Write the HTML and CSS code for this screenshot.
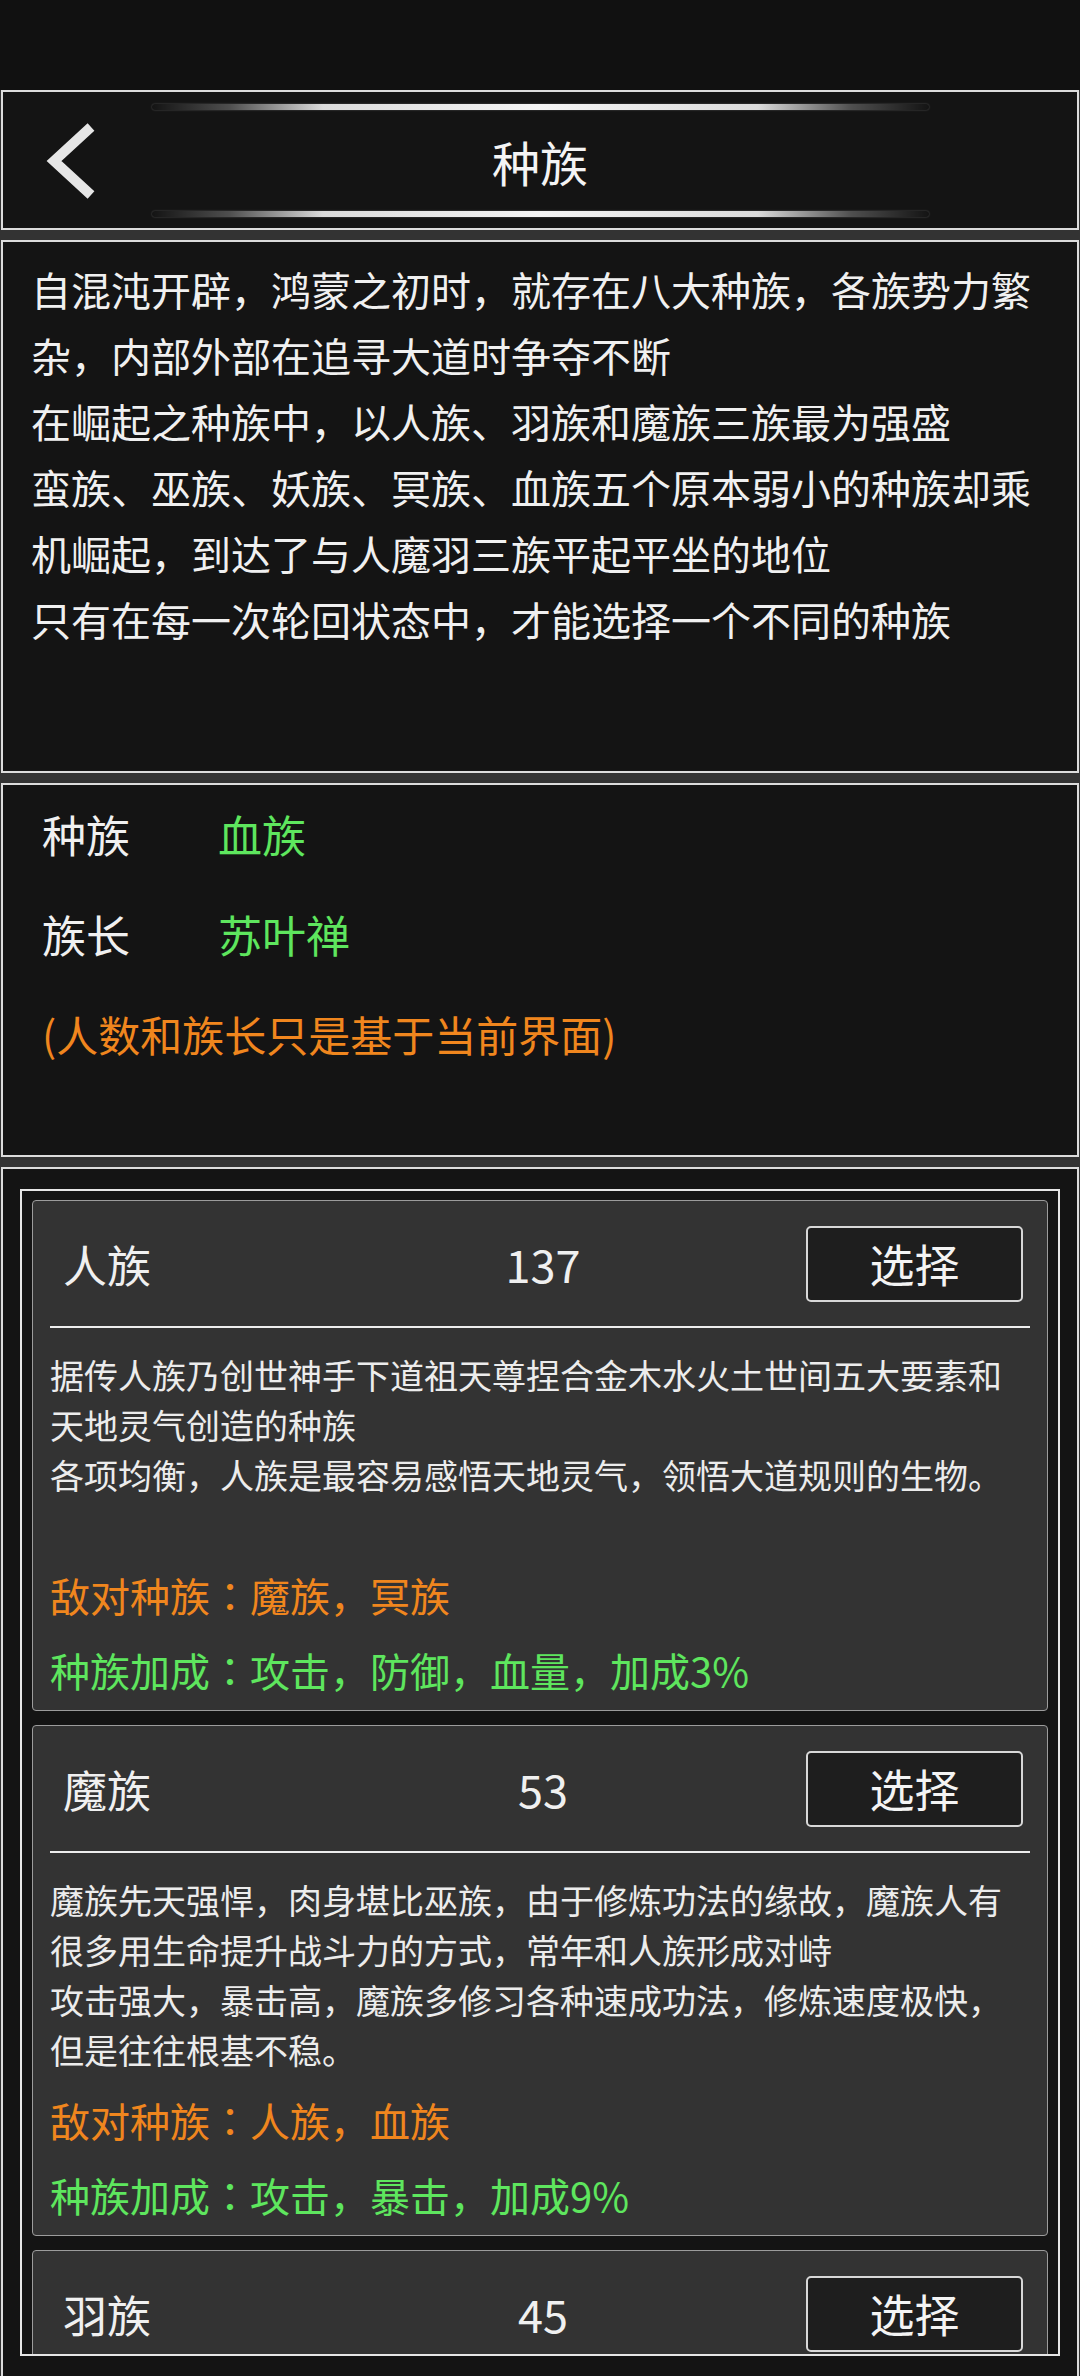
FILE: index.html
```html
<!DOCTYPE html>
<html>
<head>
<meta name="viewport" content="width=device-width, initial-scale=1.0">
<title>种族</title>
<link rel="stylesheet" href="styles.css">
</head>
<body>
<div class="statusBar"></div>

<div class="panel header">
	<div class="glow"></div>
	<div class="headRow">
		<div class="back">
			<svg width="60" height="80" viewBox="0 0 60 80">
				<path d="M50 6 L13 40 L50 74" fill="none" stroke="#e6e6e6" stroke-width="10" stroke-linejoin="miter"/>
			</svg>
		</div>
		<div class="pageTitle">种族</div>
		<div></div>
	</div>
	<div class="glow"></div>
</div>

<div class="panel intro">
	自混沌开辟，鸿蒙之初时，就存在八大种族，各族势力繁杂，内部外部在追寻大道时争夺不断<br>
	在崛起之种族中，以人族、羽族和魔族三族最为强盛<br>
	蛮族、巫族、妖族、冥族、血族五个原本弱小的种族却乘机崛起，到达了与人魔羽三族平起平坐的地位<br>
	只有在每一次轮回状态中，才能选择一个不同的种族
</div>

<div class="panel info">
	<div class="infoRow"><span class="infoLabel">种族</span><span class="green">血族</span></div>
	<div class="infoRow"><span class="infoLabel">族长</span><span class="green">苏叶禅</span></div>
	<div class="infoRow note orange">(人数和族长只是基于当前界面)</div>
</div>

<div class="panel listPanel">
	<div class="raceList">
		<div class="card">
			<div class="cardHead">
				<div class="raceName">人族</div>
				<div class="raceCount">137</div>
				<div class="btnCell"><button class="pickBtn">选择</button></div>
			</div>
			<div class="divider"></div>
			<div class="desc">据传人族乃创世神手下道祖天尊捏合金木水火土世间五大要素和天地灵气创造的种族<br>各项均衡，人族是最容易感悟天地灵气，领悟大道规则的生物。</div>
			<div class="enemy orange">敌对种族<span class="colon">：</span>魔族，冥族</div>
			<div class="bonus green">种族加成<span class="colon">：</span>攻击，防御，血量，加成3%</div>
		</div>
		<div class="card">
			<div class="cardHead">
				<div class="raceName">魔族</div>
				<div class="raceCount">53</div>
				<div class="btnCell"><button class="pickBtn">选择</button></div>
			</div>
			<div class="divider"></div>
			<div class="desc">魔族先天强悍，肉身堪比巫族，由于修炼功法的缘故，魔族人有很多用生命提升战斗力的方式，常年和人族形成对峙<br>攻击强大，暴击高，魔族多修习各种速成功法，修炼速度极快，但是往往根基不稳。</div>
			<div class="enemy orange">敌对种族<span class="colon">：</span>人族，血族</div>
			<div class="bonus green">种族加成<span class="colon">：</span>攻击，暴击，加成9%</div>
		</div>
		<div class="card">
			<div class="cardHead">
				<div class="raceName">羽族</div>
				<div class="raceCount">45</div>
				<div class="btnCell"><button class="pickBtn">选择</button></div>
			</div>
			<div class="divider"></div>
		</div>
	</div>
</div>
</body>
</html>
```

FILE: styles.css
```css
html, body, div, span, button {
	margin: 0;
	padding: 0;
	box-sizing: border-box;
}
body {
	background: #333333;
	font-family: "Noto Sans CJK SC", "Noto Sans", sans-serif;
	color: #eeeeee;
	width: 1080px;
	height: 2376px;
	overflow: hidden;
}
.statusBar {
	height: 90px;
	background: #111111;
}
.panel {
	margin: 0 1px 10px 1px;
	border: 2px solid #dcdcdc;
	background: #141414;
}
.green {
	color: #5ee65e;
}
.orange {
	color: #f0861e;
}
.colon {
	font-family: "Noto Sans CJK TC", "Noto Sans CJK SC", sans-serif;
}

/* header */
.header {
	height: 140px;
	display: flex;
	flex-direction: column;
	align-items: center;
	padding-top: 12px;
}
.glow {
	width: 777px;
	height: 6px;
	border-radius: 3px;
	background: linear-gradient(to right, rgba(255,255,255,0) 0%, rgba(255,255,255,0.25) 10%, rgba(240,240,240,0.9) 22%, #f4f4f4 50%, rgba(240,240,240,0.9) 78%, rgba(255,255,255,0.25) 90%, rgba(255,255,255,0) 100%);
	box-shadow: 0 0 2px rgba(255,255,255,0.3);
}
.headRow {
	width: 100%;
	height: 101px;
	display: grid;
	grid-template-columns: 1fr auto 1fr;
	align-items: center;
}
.back {
	padding-left: 38px;
	height: 80px;
}
.back svg {
	display: block;
}
.pageTitle {
	font-size: 48px;
	color: #f4f4f4;
}

/* intro text */
.intro {
	height: 533px;
	padding: 14px 27px 0 28px;
	font-size: 40px;
	line-height: 66px;
	color: #f0f0f0;
}

/* info */
.info {
	height: 374px;
	padding-left: 39px;
}
.infoRow {
	height: 100px;
	line-height: 98px;
	font-size: 44px;
	display: flex;
}
.infoLabel {
	width: 176px;
	color: #f0f0f0;
}
.note {
	font-size: 42px;
}

/* race list */
.listPanel {
	height: 1209px;
	margin-bottom: 0;
	border-bottom: none;
	padding: 20px 17px 0 17px;
}
.raceList {
	height: 1167px;
	border: 2px solid #e6e6e6;
	padding: 9px 10px;
	overflow: hidden;
	display: flex;
	flex-direction: column;
	gap: 14px;
}
.card {
	flex-shrink: 0;
	background: #333333;
	border: 1px solid #9c9c9c;
	border-radius: 4px;
	padding: 0 17px 15px 17px;
}
.cardHead {
	height: 125px;
	display: grid;
	grid-template-columns: 1fr auto 1fr;
	align-items: center;
	padding: 0 7px 0 13px;
}
.raceName {
	font-size: 44px;
	color: #f0f0f0;
}
.raceCount {
	font-size: 45px;
	color: #f0f0f0;
}
.btnCell {
	text-align: right;
}
.pickBtn {
	width: 217px;
	height: 76px;
	background: #1e1e1e;
	border: 2px solid #d8d8d8;
	border-radius: 5px;
	color: #f4f4f4;
	font-family: "Noto Sans CJK SC", "Noto Sans", sans-serif;
	font-size: 45px;
	line-height: 70px;
	cursor: pointer;
}
.divider {
	height: 2px;
	background: #eeeeee;
}
.desc {
	margin-top: 22px;
	min-height: 200px;
	font-size: 34px;
	line-height: 50px;
	color: #ececec;
}
.enemy {
	margin-top: 20px;
	font-size: 40px;
	line-height: 50px;
}
.bonus {
	margin-top: 25px;
	font-size: 40px;
	line-height: 50px;
}
```
